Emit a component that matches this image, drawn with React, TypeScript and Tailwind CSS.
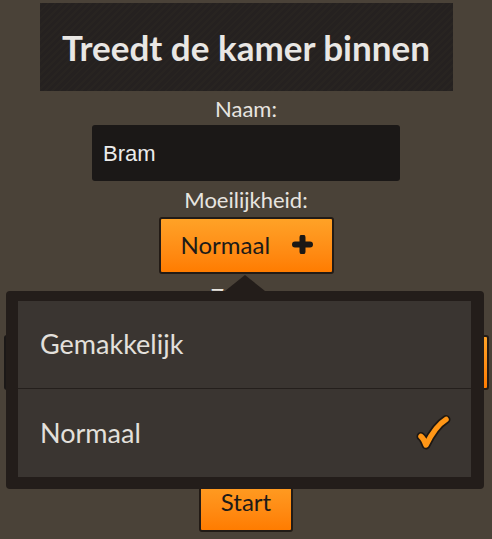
import React from "react";

const font = { fontFamily: "Lato, 'Noto Sans', sans-serif" };

function PlusIcon() {
  return (
    <svg width="21" height="19" viewBox="0 0 21 19" className="shrink-0">
      <path d="M3 9.5H18M10.5 2.5V16.5" stroke="#1b1815" strokeWidth="6" strokeLinecap="round" />
    </svg>
  );
}

function CheckIcon() {
  return (
    <svg width="36" height="38" viewBox="0 0 36 38" className="shrink-0">
      <path
        d="M5 22.5C7 24 8.5 27 10 31C15 21 21 11 30 5.5"
        fill="none"
        stroke="#1c1713"
        strokeWidth="9"
        strokeLinecap="round"
        strokeLinejoin="round"
      />
      <path
        d="M5 22.5C7 24 8.5 27 10 31C15 21 21 11 30 5.5"
        fill="none"
        stroke="#ff9616"
        strokeWidth="5.5"
        strokeLinecap="round"
        strokeLinejoin="round"
      />
    </svg>
  );
}

export default function App() {
  return (
    <div className="relative h-[539px] w-full overflow-hidden bg-[#4a4238]" style={font}>
      <div className="flex flex-col items-center pt-[3px]">
        <div className="flex h-[88px] w-[413px] items-center justify-center bg-[#262220] bg-[repeating-linear-gradient(135deg,#282421_0px,#282421_2px,#252120_2px,#252120_5px)]">
          <h1 className="text-[35px] font-bold text-[#e9e7e4]">Treedt de kamer binnen</h1>
        </div>

        <div className="flex h-[34px] items-center text-[22px] text-[#e8e5e0]">Naam:</div>
        <div className="flex h-[56px] w-[308px] items-center rounded-[3px] bg-[#1b1817] px-[11px]">
          <span className="text-[22px] text-[#ebebeb]" style={{ fontFamily: "'Liberation Sans', Arial, sans-serif" }}>
            Bram
          </span>
        </div>

        <div className="flex h-[36px] items-center text-[22px] text-[#e8e5e0]">Moeilijkheid:</div>
        <button className="flex h-[57px] w-[175px] items-center justify-between rounded-[3px] border-2 border-[#221b16] bg-gradient-to-b from-[#ffa226] to-[#ff7c00] pb-[2px] pl-[20px] pr-[19px]">
          <span className="text-[24px] text-[#1c1a18]">Normaal</span>
          <PlusIcon />
        </button>

        <div className="flex h-[36px] items-center pt-[6px] text-[22px] text-[#e8e5e0]">Zaalnr.:</div>
        <div className="mt-[25px] flex h-[55px] w-[485px] gap-2">
          <div className="flex-1 rounded-[3px] bg-[#1b1817]" />
          <div className="w-[100px] rounded-[3px] border-2 border-[#221b16] bg-gradient-to-b from-[#ffa226] to-[#ff7c00]" />
        </div>

        <button className="mt-[85px] flex h-[57px] w-[94px] items-center justify-center rounded-[3px] border-2 border-[#221b16] bg-gradient-to-b from-[#ffa226] to-[#ff7c00] pb-[3px]">
          <span className="text-[24px] text-[#1c1a18]">Start</span>
        </button>
      </div>

      {/* dropdown popup */}
      <div className="absolute left-[225px] top-[275px] h-0 w-0 border-b-[16px] border-l-[20px] border-r-[20px] border-b-[#231d1a] border-l-transparent border-r-transparent" />
      <div className="absolute left-[6px] top-[291px] flex h-[198px] w-[478px] flex-col rounded-[4px] bg-[#231d1a] pb-[12px] pl-[12px] pr-[13px] pt-[10px]">
        <div className="flex h-[87px] items-center bg-[#3a3531] pl-[22px] text-[27px] text-[#e3e0dc]">Gemakkelijk</div>
        <div className="h-px bg-[#241f1c]" />
        <div className="flex flex-1 items-center justify-between bg-[#3a3531] pl-[22px] pr-[19px] text-[27px] text-[#e3e0dc]">
          <span>Normaal</span>
          <CheckIcon />
        </div>
      </div>
    </div>
  );
}
